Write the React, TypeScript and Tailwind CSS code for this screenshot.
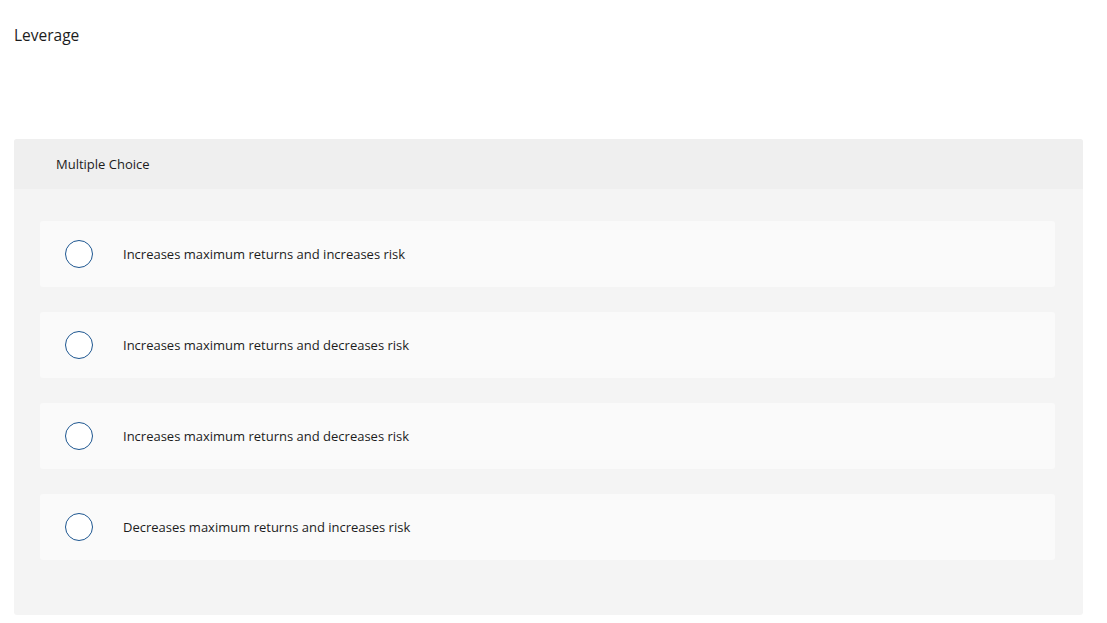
import React from 'react';

const options = [
  'Increases maximum returns and increases risk',
  'Increases maximum returns and decreases risk',
  'Increases maximum returns and decreases risk',
  'Decreases maximum returns and increases risk',
];

const App: React.FC = () => {
  return (
    <div className="min-h-screen bg-white px-[14px] pt-[25px] text-[#1c1c1c]" style={{ fontFamily: '"Open Sans", "Liberation Sans", sans-serif' }}>
      {/* Question prompt */}
      <p className="text-[15.5px] leading-[20px]">Leverage</p>

      {/* Answer panel */}
      <div className="mt-[94px] w-[1069px] rounded-[3px] bg-[#f4f4f4] overflow-hidden">
        <div className="h-[50px] bg-[#efefef] pl-[42px] pt-[2px] flex items-center">
          <span className="text-[13px]">Multiple Choice</span>
        </div>
        <div className="pl-[26px] pr-[28px] pt-[32px] pb-[55px] flex flex-col gap-[25px]">
          {options.map((label, i) => (
            <label key={i} className="h-[66px] rounded-[3px] bg-[#fafafa] flex items-center cursor-pointer">
              <span className="ml-[25px] w-[28px] h-[28px] rounded-full border-[1.5px] border-[#1d5690] bg-white shrink-0"></span>
              <span className="ml-[30px] text-[13px] pt-[1px]">{label}</span>
            </label>
          ))}
        </div>
      </div>
    </div>
  );
};

export default App;
